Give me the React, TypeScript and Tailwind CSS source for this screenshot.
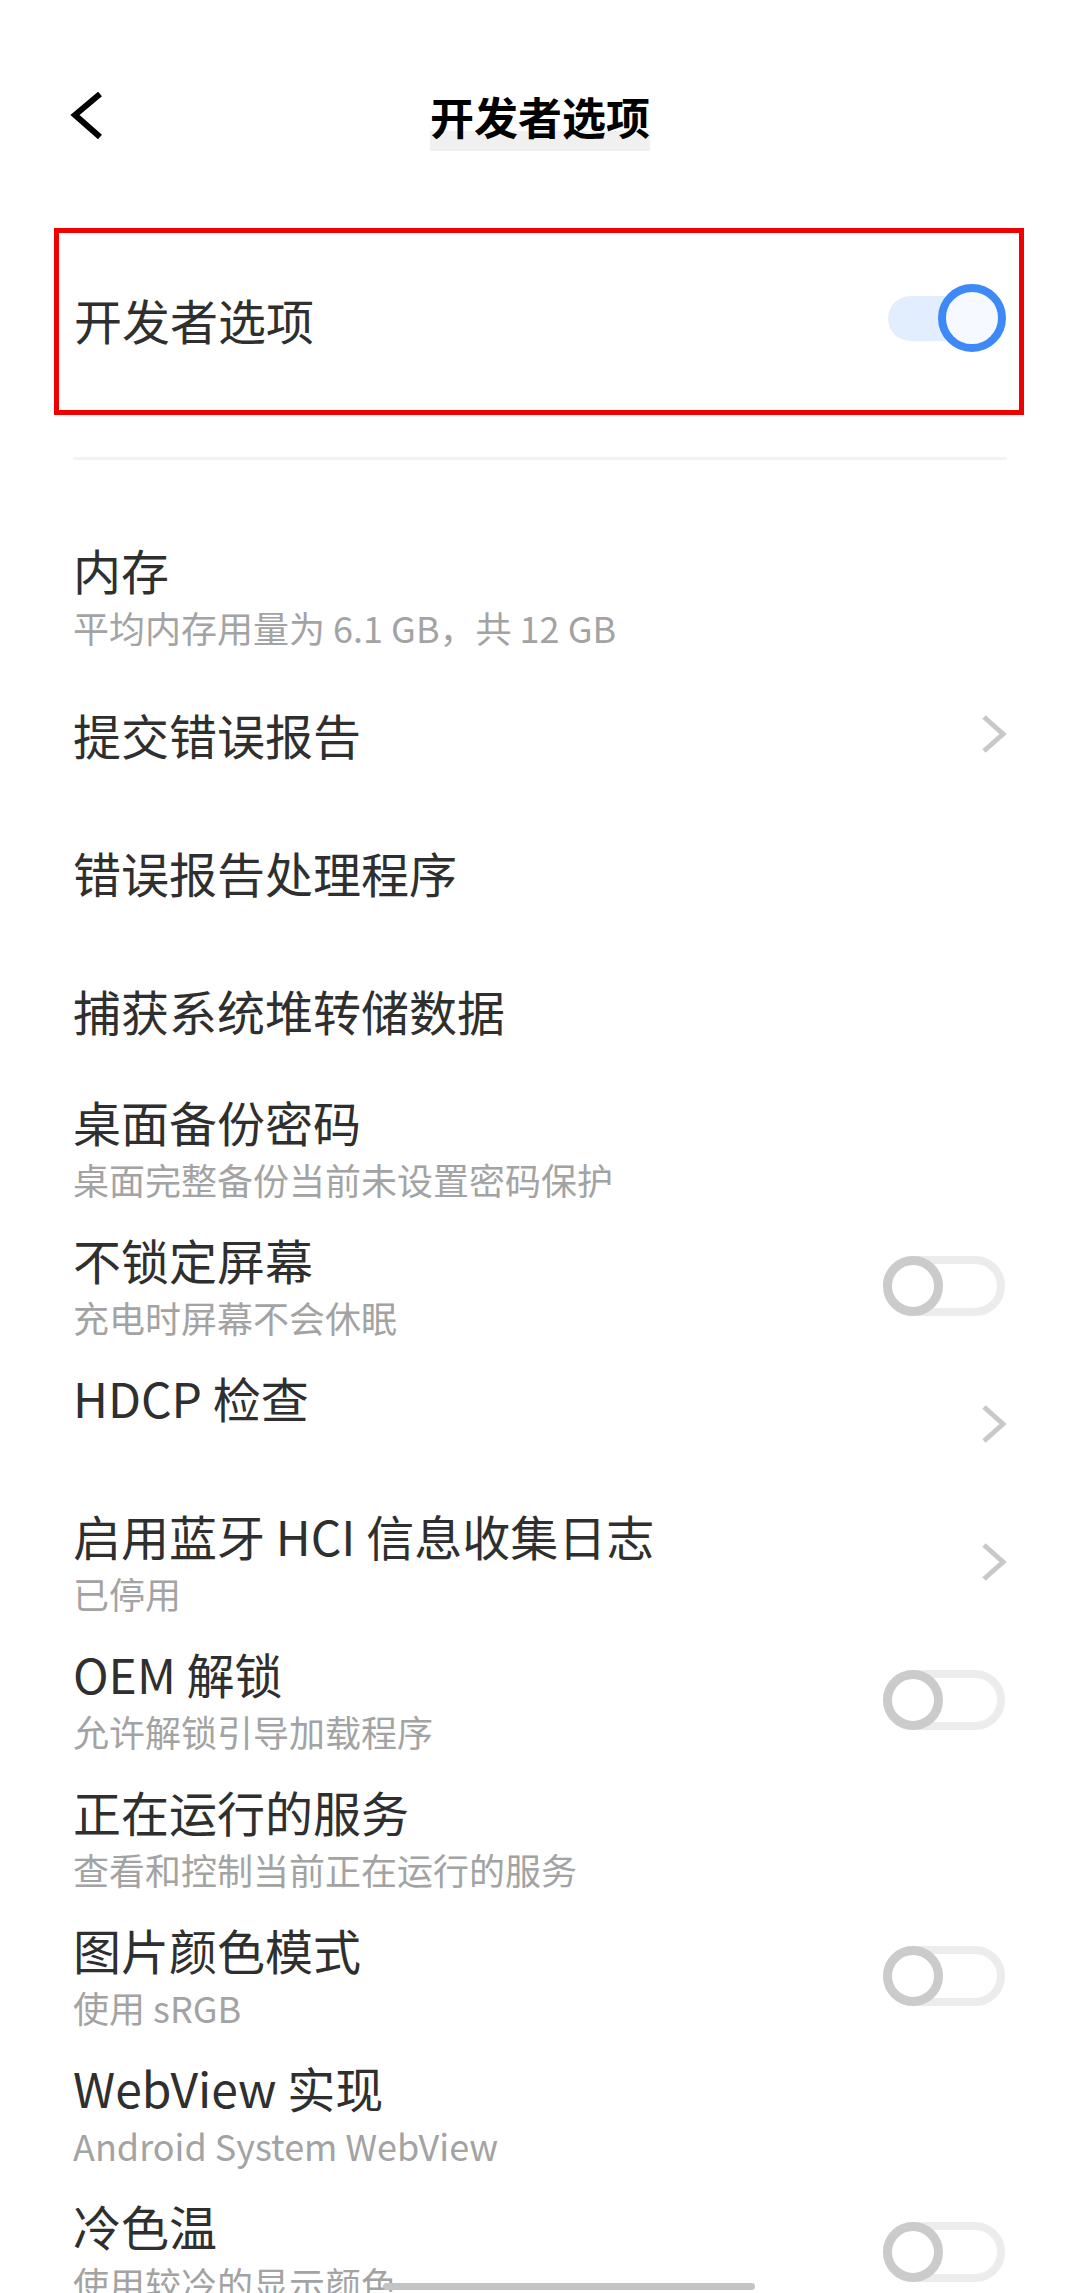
import React from 'react'

type Row = {
  title: string
  sub?: string
  right?: 'chevron' | 'toggle'
}

const rows: Row[] = [
  { title: '内存', sub: '平均内存用量为 6.1 GB，共 12 GB' },
  { title: '提交错误报告', right: 'chevron' },
  { title: '错误报告处理程序' },
  { title: '捕获系统堆转储数据' },
  { title: '桌面备份密码', sub: '桌面完整备份当前未设置密码保护' },
  { title: '不锁定屏幕', sub: '充电时屏幕不会休眠', right: 'toggle' },
  { title: 'HDCP 检查', sub: '', right: 'chevron' },
  { title: '启用蓝牙 HCI 信息收集日志', sub: '已停用', right: 'chevron' },
  { title: 'OEM 解锁', sub: '允许解锁引导加载程序', right: 'toggle' },
  { title: '正在运行的服务', sub: '查看和控制当前正在运行的服务' },
  { title: '图片颜色模式', sub: '使用 sRGB', right: 'toggle' },
  { title: 'WebView 实现', sub: 'Android System WebView' },
  { title: '冷色温', sub: '使用较冷的显示颜色', right: 'toggle' },
]

function Chevron() {
  return (
    <svg width="26" height="40" viewBox="0 0 26 40" className="shrink-0">
      <polyline points="3,3 22,20 3,37" fill="none" stroke="#c8c8c8" strokeWidth="5" />
    </svg>
  )
}

function ToggleOff() {
  return (
    <div className="relative w-[122px] h-[60px] shrink-0 mr-[2px]">
      <div className="w-full h-full rounded-full border-[8px] border-[#ececec] bg-white" />
      <div className="absolute left-0 top-0 w-[60px] h-[60px] rounded-full border-[9px] border-[#cbcbcb] bg-white" />
    </div>
  )
}

function ToggleOn() {
  return (
    <div className="relative w-[118px] h-[68px] shrink-0 -mt-[8px]">
      <div className="absolute left-0 top-[12px] w-[100px] h-[45px] rounded-full bg-[#e2eefd]" />
      <div className="absolute right-0 top-0 w-[68px] h-[68px] rounded-full border-[8px] border-[#3d8af7] bg-[#f6f9ff]" />
    </div>
  )
}

function ListRow({ row }: { row: Row }) {
  return (
    <div className="h-[138px] flex items-center justify-between px-[73px]">
      <div className="flex flex-col">
        <div className="text-[48px] leading-[52px] text-[#2f2f2f] whitespace-nowrap">{row.title}</div>
        {row.sub !== undefined && (
          <div className="mt-[10px] text-[36px] leading-[44px] h-[44px] text-[#a3a3a3] whitespace-nowrap">
            {row.sub}
          </div>
        )}
      </div>
      {row.right === 'chevron' && <Chevron />}
      {row.right === 'toggle' && <ToggleOff />}
    </div>
  )
}

export default function App() {
  return (
    <div className="relative w-[1080px] h-[2293px] overflow-hidden bg-white font-['Noto_Sans_CJK_SC','Noto_Sans',sans-serif]">
      {/* header */}
      <div className="h-[228px] pt-[92px]">
        <div className="grid grid-cols-[1fr_auto_1fr] items-center h-[46px]">
          <div className="pl-[70px]">
            <svg width="34" height="48" viewBox="0 0 34 48">
              <polyline points="30,2 5,23 30,45" fill="none" stroke="#000" strokeWidth="6" />
            </svg>
          </div>
          <span className="relative isolate text-[44px] leading-[46px] font-bold text-black">
            开发者选项
            <span className="absolute left-0 right-0 top-[38px] h-[20px] bg-[#f0f0f0] -z-10" />
          </span>
          <div />
        </div>
      </div>

      {/* master switch */}
      <div className="ml-[54px] w-[970px] h-[187px] border-[5px] border-[#f00000] flex items-center justify-between pl-[15px] pr-[13px]">
        <div className="text-[48px] leading-[52px] text-[#2f2f2f] -mt-[6px]">开发者选项</div>
        <ToggleOn />
      </div>

      <div className="mt-[42px] mx-[73px] h-[3px] bg-[#f2f2f2]" />

      <div className="mt-[67px]">
        {rows.map((r) => (
          <ListRow key={r.title} row={r} />
        ))}
      </div>

      {/* home indicator */}
      <div className="absolute left-[383px] bottom-[3px] w-[372px] h-[7px] rounded-full bg-[#c4c4c4]" />
    </div>
  )
}
